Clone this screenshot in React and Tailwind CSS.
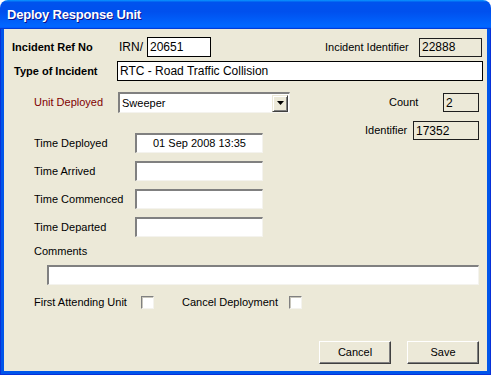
import React from 'react';

const sunken =
  'bg-white border-t-2 border-l-2 border-b border-r border-t-[#808080] border-l-[#808080] border-b-[#f4f3ee] border-r-[#f4f3ee]';

const Sunken = ({ className = '', children, center = false }) => (
  <div
    className={`${sunken} h-[20px] flex items-center ${
      center ? 'justify-center' : 'pl-[2px]'
    } ${className}`}
  >
    {children}
  </div>
);

const ReadOnly = ({ className = '', children }) => (
  <div
    className={`h-[19px] border border-[#1e1e1e] bg-[#ece9d8] flex items-center pl-[2px] text-[12px] ${className}`}
  >
    {children}
  </div>
);

const Checkbox = () => (
  <div className="w-[13px] h-[13px] bg-white border border-t-[#808080] border-l-[#808080] border-b-[#f4f3ee] border-r-[#f4f3ee] shadow-[inset_1px_1px_0_#c8c6bc]" />
);

const Button = ({ children }) => (
  <button className="w-[72px] h-[23px] bg-[#ece9d8] border border-t-white border-l-white border-b-[#404040] border-r-[#404040] shadow-[inset_-1px_-1px_0_#808080] flex items-center justify-center text-[11px] text-black">
    {children}
  </button>
);

const TimeRow = ({ label, value, first }) => (
  <div className={`flex items-center h-[20px] ${first ? 'mt-[20px]' : 'mt-[8px]'}`}>
    <span className="ml-[30px] w-[101px]">{label}</span>
    <Sunken className="w-[128px]" center>
      {value}
    </Sunken>
  </div>
);

export default function App() {
  return (
    <div className="w-[491px] h-[375px] flex flex-col bg-white font-['Liberation_Sans',Arial,sans-serif] text-[11px] text-black leading-none">
      {/* title bar */}
      <div className="h-[29px] shrink-0 rounded-t-[8px] bg-[linear-gradient(180deg,#0997ff_0%,#0053ee_8%,#0050ee_40%,#0066ff_88%,#0066ff_93%,#005bff_95%,#003dd7_96%,#003dd7_100%)] flex items-center pl-[7px]">
        <span className="text-white font-bold text-[13px] [text-shadow:1px_1px_0_#0f1089] tracking-[-0.2px]">
          Deploy Response Unit
        </span>
      </div>

      {/* window frame */}
      <div className="flex-1 flex flex-col bg-[#0055ea] border-x border-b border-[#0831d9] px-[3px] pb-[3px]">
        <div className="flex-1 flex flex-col bg-[#ece9d8]">
          {/* incident ref */}
          <div className="flex items-center h-[20px] mt-[8px]">
            <span className="ml-[8px] w-[107px] font-bold">Incident Ref No</span>
            <span className="w-[28px] text-[12px]">IRN/</span>
            <div className="w-[64px] h-[20px] bg-white border border-black flex items-center pl-[2px] text-[12px]">
              20651
            </div>
            <div className="flex-1" />
            <span className="w-[94px]">Incident Identifier</span>
            <ReadOnly className="w-[63px] mr-[5px]">22888</ReadOnly>
          </div>

          {/* type of incident */}
          <div className="flex items-center h-[20px] mt-[4px]">
            <span className="ml-[10px] w-[103px] font-bold">Type of Incident</span>
            <div className="flex-1 mr-[4px] h-[20px] bg-white border border-black flex items-center pl-[2px] text-[12px]">
              RTC - Road Traffic Collision
            </div>
          </div>

          {/* unit / times + count / identifier */}
          <div className="flex mt-[11px]">
            <div className="flex-1 flex flex-col">
              <div className="flex items-center h-[21px]">
                <span className="ml-[30px] w-[84px] text-[#800000]">Unit Deployed</span>
                <div className={`${sunken} w-[172px] h-[21px] flex items-center justify-between`}>
                  <span className="pl-[2px]">Sweeper</span>
                  <div className="w-[16px] h-[17px] mr-[1px] bg-[#ece9d8] border border-t-[#ece9d8] border-l-[#ece9d8] border-b-[#404040] border-r-[#404040] shadow-[inset_1px_1px_0_#fff,inset_-1px_-1px_0_#808080] flex items-center justify-center">
                    <svg width="7" height="4" viewBox="0 0 7 4">
                      <path d="M0 0h7L3.5 4z" fill="#000" />
                    </svg>
                  </div>
                </div>
              </div>
              <TimeRow label="Time Deployed" value="01 Sep 2008 13:35" first />
              <TimeRow label="Time Arrived" value="" />
              <TimeRow label="Time Commenced" value="" />
              <TimeRow label="Time Departed" value="" />
            </div>

            <div className="flex flex-col items-end mr-[8px]">
              <div className="flex items-center mt-[1px]">
                <span className="w-[54px]">Count</span>
                <ReadOnly className="w-[36px]">2</ReadOnly>
              </div>
              <div className="flex items-center mt-[9px]">
                <span className="w-[48px]">Identifier</span>
                <ReadOnly className="w-[66px]">17352</ReadOnly>
              </div>
            </div>
          </div>

          {/* comments */}
          <div className="h-[14px] mt-[7px] ml-[30px] flex items-center">Comments</div>
          <div className={`${sunken} h-[20px] mt-[7px] ml-[43px] mr-[8px]`} />

          {/* checkboxes */}
          <div className="flex items-center h-[13px] mt-[11px]">
            <span className="ml-[30px] w-[107px]">First Attending Unit</span>
            <Checkbox />
            <span className="ml-[28px] w-[107px]">Cancel Deployment</span>
            <Checkbox />
          </div>

          {/* buttons */}
          <div className="flex justify-end gap-[16px] mt-[32px] mr-[8px]">
            <Button>Cancel</Button>
            <Button>Save</Button>
          </div>
        </div>
      </div>
    </div>
  );
}
